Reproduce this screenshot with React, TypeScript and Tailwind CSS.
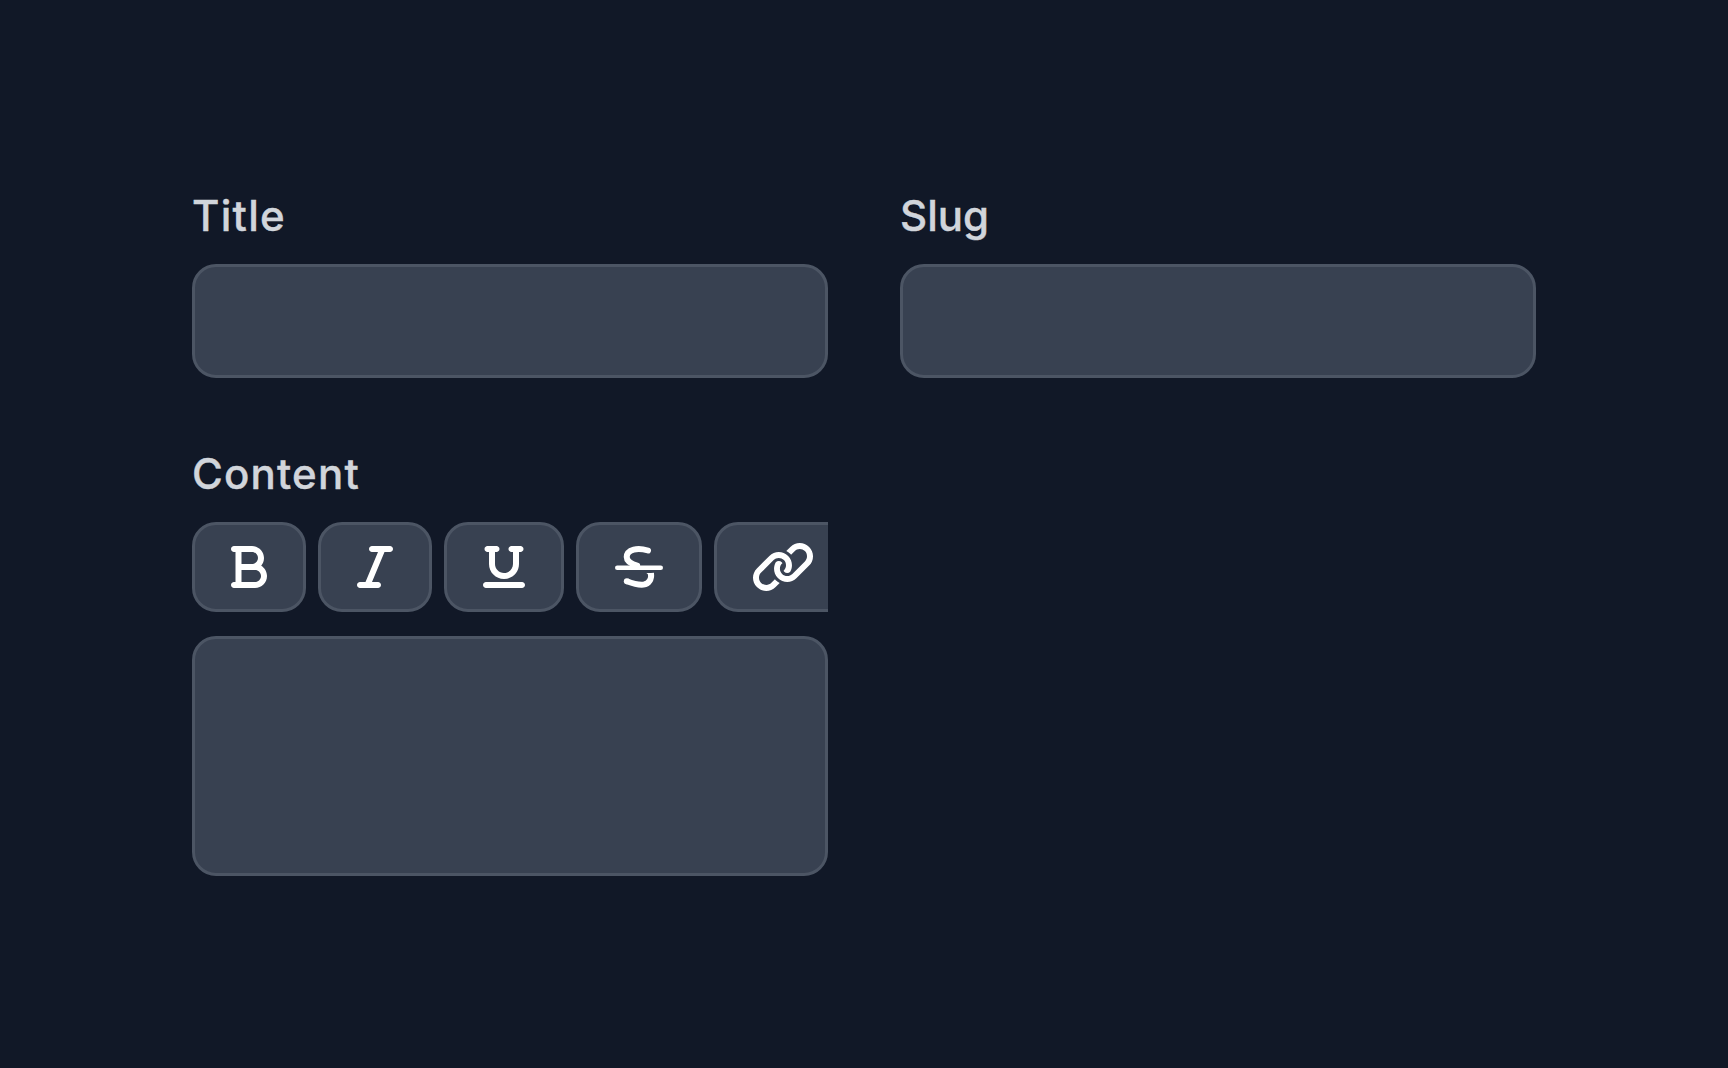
import type { ReactNode } from 'react'
import { FaBold, FaItalic, FaUnderline } from 'react-icons/fa6'

function StrikethroughIcon({ className }: { className?: string }) {
  return (
    <svg viewBox="0 0 512 512" fill="none" stroke="currentColor" strokeWidth="64" className={className}>
      <path strokeLinecap="round" d="M352 80C300 64 244 58 200 70C150 84 125 111 125 150C125 202 176 224 236 242" />
      <path d="M384 320C392 388 362 436 304 444C252 450 184 430 126 408" />
      <path fill="currentColor" stroke="none" d="M334 320H416V350H354C353 334 346 326 334 320Z" />
      <circle cx="126" cy="408" r="32" fill="currentColor" stroke="none" />
      <rect y="240" width="512" height="48" rx="24" fill="currentColor" stroke="none" />
    </svg>
  )
}

function LinkIcon({ className }: { className?: string }) {
  return (
    <svg viewBox="0 0 640 512" fill="currentColor" className={className}>
      <path d="M598.6 41.41C570.1 13.8 534.8 0 498.6 0s-72.36 13.8-99.96 41.41l-43.36 43.36c15.11 8.012 29.47 17.58 41.91 30.02c3.146 3.146 5.898 6.518 8.742 9.838l37.96-37.96C458.5 72.05 477.1 64 498.6 64c20.67 0 40.1 8.047 54.71 22.66c14.61 14.61 22.66 34.04 22.66 54.71s-8.049 40.1-22.66 54.71l-133.3 133.3C405.5 343.1 386 352 365.4 352s-40.1-8.048-54.71-22.66C296 314.7 287.1 295.3 287.1 274.6s8.047-40.1 22.66-54.71L314.2 216.4C312.5 212.1 309.9 208.5 306.7 205.3C298.1 196.7 286.8 192 274.6 192c-11.93 0-23.1 4.664-31.61 12.97c-30.71 53.96-23.63 123.6 22.39 169.6C293 402.2 329.2 416 365.4 416c36.18 0 72.36-13.8 99.96-41.41L598.6 241.3c28.45-28.45 42.24-66.01 41.37-103.3C639.1 102.1 625.4 68.16 598.6 41.41z" />
      <path d="M234 387.4L196.1 425.3C181.5 439.1 162 448 141.4 448c-20.67 0-40.1-8.047-54.71-22.66c-14.61-14.61-22.66-34.04-22.66-54.71s8.049-40.1 22.66-54.71l133.3-133.3C234.5 168 253.1 160 274.6 160s40.1 8.048 54.71 22.66c14.62 14.61 22.66 34.04 22.66 54.71s-8.047 40.1-22.66 54.71L325.8 295.6c1.69 4.309 4.251 7.929 7.466 11.14C341.9 315.3 353.3 320 365.4 320c11.93 0 23.1-4.664 31.61-12.97c30.71-53.96 23.63-123.6-22.39-169.6C346.1 109.8 310.8 96 274.6 96C238.4 96 202.3 109.8 174.7 137.4L41.41 270.7c-27.6 27.6-41.41 63.78-41.41 99.96c0 36.18 13.8 72.36 41.41 99.97C69.01 498.2 105.2 512 141.4 512c36.18 0 72.36-13.8 99.96-41.41l43.36-43.36C269.6 419.2 255.3 409.6 242.8 397.2C239.7 394.1 236.9 390.7 234 387.4z" />
    </svg>
  )
}

const tools = [
  { name: 'Bold', Icon: FaBold, width: 'w-9' },
  { name: 'Italic', Icon: FaItalic, width: 'w-9' },
  { name: 'Underline', Icon: FaUnderline, width: 'w-[42px]' },
  { name: 'Strikethrough', Icon: StrikethroughIcon, width: 'w-12' },
  { name: 'Link', Icon: LinkIcon, width: 'w-[60px]' },
]

const fieldClass =
  'block w-full rounded-3xl border-[3px] border-[#4c5564] bg-[#384151] px-9 text-[42px] text-white outline-none'

function Field({ id, label, spacing, children }: { id: string; label: string; spacing: string; children: ReactNode }) {
  return (
    <div className="min-w-0">
      <label
        htmlFor={id}
        className={`mb-6 block h-12 w-fit whitespace-nowrap text-[42px] leading-[48px] font-medium text-[#d1d5db] [-webkit-text-stroke:0.4px_#d1d5db] ${spacing}`}
      >
        {label}
      </label>
      {children}
    </div>
  )
}

export default function App() {
  return (
    <main className="min-h-screen bg-[#111827] p-48 font-['Inter',sans-serif]">
      <form className="grid grid-cols-2 gap-[72px]">
        <Field id="title" label="Title" spacing="tracking-[1.3px]">
          <input id="title" type="text" className={`h-[114px] ${fieldClass}`} />
        </Field>
        <Field id="slug" label="Slug" spacing="tracking-normal">
          <input id="slug" type="text" className={`h-[114px] ${fieldClass}`} />
        </Field>
        <Field id="content" label="Content" spacing="tracking-[1.2px]">
          <div className="mb-6 flex gap-3 overflow-hidden">
            {tools.map(({ name, Icon, width }) => (
              <button
                key={name}
                type="button"
                aria-label={name}
                className="shrink-0 rounded-3xl border-[3px] border-[#4c5564] bg-[#384151] px-9 py-[18px] text-white"
              >
                <Icon className={`h-12 ${width}`} />
              </button>
            ))}
          </div>
          <textarea id="content" className={`h-60 resize-none ${fieldClass}`} />
        </Field>
      </form>
    </main>
  )
}
